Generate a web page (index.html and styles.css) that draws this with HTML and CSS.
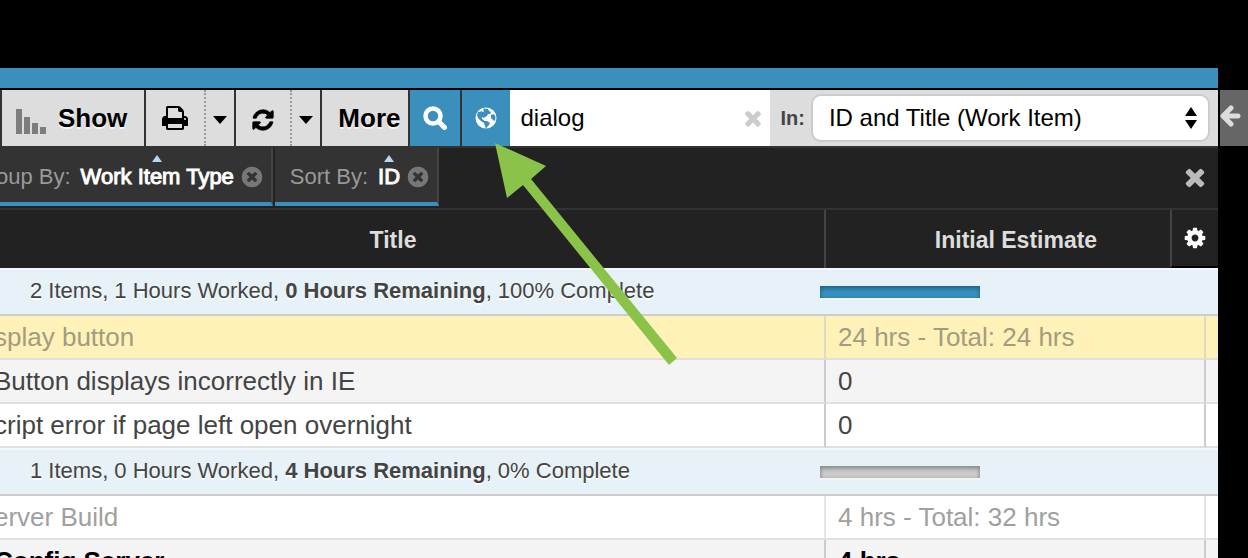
FILE: index.html
```html
<!DOCTYPE html>
<html lang="en">
<head>
  <meta charset="utf-8">
  <title>Work Items</title>
  <link rel="stylesheet" href="styles.css">
</head>
<body>
  <svg class="sprite" aria-hidden="true">
    <symbol id="i-times" viewBox="0 0 1792 1792"><path d="M1490 1322q0 40-28 68l-136 136q-28 28-68 28t-68-28l-294-294-294 294q-28 28-68 28t-68-28l-136-136q-28-28-28-68t28-68l294-294-294-294q-28-28-28-68t28-68l136-136q28-28 68-28t68 28l294 294 294-294q28-28 68-28t68 28l136 136q28 28 28 68t-28 68l-294 294 294 294q28 28 28 68z"/></symbol>
    <symbol id="i-remove" viewBox="0 0 1792 1792"><path d="M1277 1122q0-26-19-45l-181-181 181-181q19-19 19-45 0-27-19-46l-90-90q-19-19-46-19-26 0-45 19l-181 181-181-181q-19-19-45-19-27 0-46 19l-90 90q-19 19-19 46 0 26 19 45l181 181-181 181q-19 19-19 45 0 27 19 46l90 90q19 19 46 19 26 0 45-19l181-181 181 181q19 19 45 19 27 0 46-19l90-90q19-19 19-46zm387-226q0 209-103 385.5t-279.5 279.5-385.5 103-385.5-103-279.5-279.5-103-385.5 103-385.5 279.5-279.5 385.5-103 385.5 103 279.5 279.5 103 385.5z"/></symbol>
  </svg>

  <div class="page">
    <main class="panel">
      <div class="topBar"></div>

      <div class="toolbar">
        <button class="tool showBtn" type="button">
          <svg width="32" height="26" viewBox="0 0 32 26"><path fill="#7d7d7d" d="M0 1h6v25H0zM8 9h6v17H8zM16 15h6v11h-6zM24 19h6v7h-6z"/></svg>
          Show
        </button>
        <div class="split">
          <button class="tool printBtn" type="button" aria-label="Print">
            <svg width="28" height="28" viewBox="0 0 1792 1792"><path d="M448 1536h896v-256h-896v256zm0-640h896v-384h-160q-40 0-68-28t-28-68v-160h-640v640zm1152 64q0-26-19-45t-45-19-45 19-19 45 19 45 45 19 45-19 19-45zm128 0v416q0 13-9.500 22.500t-22.500 9.500h-224v160q0 40-28 68t-68 28h-960q-40 0-68-28t-28-68v-160h-224q-13 0-22.500-9.500t-9.500-22.500v-416q0-79 56.500-135.500t135.500-56.500h64v-544q0-40 28-68t68-28h672q40 0 88 20t76 48l152 152q28 28 48 76t20 88v256h64q79 0 135.500 56.500t56.500 135.500z"/></svg>
          </button>
          <button class="tool caret" type="button" aria-label="Print options">
            <svg width="14" height="8" viewBox="0 0 14 8"><path d="M0 0h14L7 8z"/></svg>
          </button>
        </div>
        <div class="split">
          <button class="tool refreshBtn" type="button" aria-label="Refresh">
            <svg width="24" height="24" viewBox="0 0 1792 1792"><path d="M1639 1056q0 5-1 7-64 268-268 434.500t-478 166.500q-146 0-282.500-55t-243.500-157l-129 129q-19 19-45 19t-45-19-19-45v-448q0-26 19-45t45-19h448q26 0 45 19t19 45-19 45l-137 137q71 66 161 102t187 36q134 0 250-65t186-179q11-17 53-117 8-23 30-23h192q13 0 22.500 9.500t9.500 22.500zm25-800v448q0 26-19 45t-45 19h-448q-26 0-45-19t-19-45 19-45l138-138q-148-137-349-137-134 0-250 65t-186 179q-11 17-53 117-8 23-30 23h-199q-13 0-22.500-9.500t-9.500-22.500v-7q65-268 270-434.500t480-166.500q146 0 284 55.500t245 156.500l130-129q19-19 45-19t45 19 19 45z"/></svg>
          </button>
          <button class="tool caret" type="button" aria-label="Refresh options">
            <svg width="14" height="8" viewBox="0 0 14 8"><path d="M0 0h14L7 8z"/></svg>
          </button>
        </div>
        <button class="tool moreBtn" type="button">More</button>
        <button class="tool blue searchBtn" type="button" aria-label="Search">
          <svg width="24" height="24" viewBox="0 0 24 24"><circle cx="10" cy="10" r="7.500" fill="none" stroke="#fff" stroke-width="4.500"/><path d="M15.500 15.500l6 6" stroke="#fff" stroke-width="5" stroke-linecap="round"/></svg>
        </button>
        <button class="tool blue globeBtn" type="button" aria-label="Search everywhere">
          <svg width="22" height="22" viewBox="0 0 22 22"><circle cx="11" cy="11" r="10.500"/><path fill="#3a8fbd" d="M9 1.500l4 .5 1 2 2 1-1 2-2 0-1 2-2 1-1 1-2-1 0 2 2 1 0 1 3 0 3 2-1 2-2 2-1 2-1-3-1-3-3-2-3-3-1-3 1-3 2 0 1-1 2 1 1-1-1-2zM16 8l3-1 1.500 3-.5 4-2-1-2-2z"/></svg>
        </button>
        <div class="searchBox">
          <input type="text" value="dialog" aria-label="Search text">
          <button class="clearBtn" type="button" aria-label="Clear"><svg width="24" height="24"><use href="#i-times"/></svg></button>
        </div>
        <div class="scope">
          <label for="scope">In:</label>
          <div class="selectWrap">
            <select id="scope"><option>ID and Title (Work Item)</option></select>
            <svg class="arrows" width="12" height="22" viewBox="0 0 12 22"><path d="M6 0l6 9H0zM6 22l6-9H0z"/></svg>
          </div>
        </div>
      </div>

      <div class="filters">
        <div class="chip"><span class="chipLabel">oup By:</span><span class="chipValue">Work Item Type</span><button type="button" aria-label="Remove grouping"><svg width="24" height="24"><use href="#i-remove"/></svg></button></div>
        <div class="chip sortChip"><span class="chipLabel">Sort By:</span><span class="chipValue">ID</span><button type="button" aria-label="Remove sort"><svg width="24" height="24"><use href="#i-remove"/></svg></button></div>
        <button class="closeBtn" type="button" aria-label="Close"><svg width="28" height="28"><use href="#i-times"/></svg></button>
      </div>

      <div class="gridWrap">
        <table class="grid">
          <colgroup><col><col class="colEstimate"><col class="colEnd"></colgroup>
          <thead>
            <tr><th class="titleHead">Title</th><th>Initial Estimate</th><th></th></tr>
          </thead>
          <tbody>
            <tr class="group">
              <td colspan="3"><div class="summary"><span>2 Items, 1 Hours Worked, <b>0 Hours Remaining</b>, 100% Complete</span><div class="bar done"></div></div></td>
            </tr>
            <tr class="picked"><td>splay button</td><td>24 hrs - Total: 24 hrs</td><td></td></tr>
            <tr class="odd"><td>Button displays incorrectly in IE</td><td>0</td><td></td></tr>
            <tr><td>cript error if page left open overnight</td><td>0</td><td></td></tr>
            <tr class="group">
              <td colspan="3"><div class="summary"><span>1 Items, 0 Hours Worked, <b>4 Hours Remaining</b>, 0% Complete</span><div class="bar"></div></div></td>
            </tr>
            <tr class="dim"><td>erver Build</td><td>4 hrs - Total: 32 hrs</td><td></td></tr>
            <tr class="odd strong"><td>Config Server</td><td>4 hrs</td><td></td></tr>
          </tbody>
        </table>
        <button class="gearBtn" type="button" aria-label="Columns">
          <svg width="24" height="24" viewBox="0 0 1792 1792"><path d="M1152 896q0-106-75-181t-181-75-181 75-75 181 75 181 181 75 181-75 75-181zm512-109v222q0 12-8 23t-20 13l-185 28q-19 54-39 91 35 50 107 138 10 12 10 25t-9 23q-27 37-99 108t-94 71q-12 0-26-9l-138-108q-44 23-91 38-16 136-29 186-7 28-36 28h-222q-14 0-24.500-8.500t-11.500-21.500l-28-184q-49-16-90-37l-141 107q-10 9-25 9-14 0-25-11-126-114-165-168-7-10-7-23 0-12 8-23 15-21 51-66.500t54-70.500q-27-50-41-99l-183-27q-13-2-21-12.500t-8-23.500v-222q0-12 8-23t19-13l186-28q14-46 39-92-40-57-107-138-10-12-10-24 0-10 9-23 26-36 98.500-107.500t94.500-71.500q13 0 26 10l138 107q44-23 91-38 16-136 29-186 7-28 36-28h222q14 0 24.500 8.500t11.500 21.500l28 184q49 16 90 37l142-107q9-9 24-9 13 0 25 10 129 119 165 170 7 8 7 22 0 12-8 23-15 21-51 66.500t-54 70.500q26 50 41 98l183 28q13 2 21 12.500t8 23.500z"/></svg>
        </button>
      </div>
    </main>

    <aside class="side">
      <button type="button" aria-label="Open side panel">
        <svg width="22" height="24" viewBox="0 0 22 24"><path d="M11 4l-8 8 8 8M4 12h14" fill="none" stroke="#ddd" stroke-width="5" stroke-linecap="round" stroke-linejoin="round"/></svg>
      </button>
    </aside>

    <svg class="pointer" width="184" height="224" viewBox="0 0 184 224"><path fill="#8bc34a" d="M0 0l51 23-15 13 146 179-8 7L28 42 12 55z"/></svg>
  </div>
</body>
</html>
```

FILE: styles.css
```css
* {
  box-sizing: border-box;
}

body {
  margin: 0;
  background: #000;
  font-family: "Liberation Sans", Arial, sans-serif;
  color: #444;
  overflow: hidden;
}

button {
  font: inherit;
  color: inherit;
  border: 0;
  padding: 0;
  background: none;
}

svg {
  display: block;
  fill: currentColor;
}

.sprite {
  position: absolute;
  width: 0;
  height: 0;
}

.page {
  position: relative;
  display: flex;
  gap: 2px;
  height: 100vh;
  padding-top: 68px;
  overflow: hidden;
}

.panel {
  flex: 1;
  min-width: 0;
}

.topBar {
  height: 20px;
  margin-bottom: 2px;
  background: #3a8fbd;
}

/* toolbar */
.toolbar {
  display: flex;
  gap: 2px;
  height: 58px;
  padding-left: 2px;
  border-bottom: 2px solid #333;
  background: #333;
}

.tool {
  display: flex;
  align-items: center;
  justify-content: center;
  background: #ddd;
  color: #000;
  font-size: 26px;
  font-weight: bold;
  text-shadow: 0 2px 0 #f4f4f4;
}

.showBtn {
  gap: 10px;
  padding: 0 17px 0 14px;
}

.showBtn svg {
  margin-top: 6px;
}

.split {
  display: flex;
}

.printBtn {
  width: 60px;
  border-right: 2px dotted #999;
}

.refreshBtn {
  width: 56px;
  padding-top: 3px;
  border-right: 2px dotted #999;
}

.refreshBtn path {
  stroke: currentColor;
  stroke-width: 50px;
}

.caret {
  width: 28px;
  padding-top: 3px;
}

.moreBtn {
  padding: 0 8px 0 16px;
}

.blue {
  background: #3a8fbd;
  color: #fff;
}

.searchBtn {
  width: 50px;
}

.globeBtn {
  width: 48px;
}

.searchBox {
  display: flex;
  align-items: center;
  width: 260px;
  margin-left: -2px;
  padding: 0 5px 0 10px;
  background: #fff;
}

.searchBox input {
  flex: 1;
  min-width: 0;
  border: 0;
  padding: 0;
  outline: none;
  background: none;
  color: #000;
  font: 24px "Liberation Sans", Arial, sans-serif;
}

.clearBtn {
  color: #ccc;
}

.scope {
  flex: 1;
  display: flex;
  align-items: center;
  gap: 6px;
  margin-left: -2px;
  padding: 0 8px 0 10px;
  background: #ddd;
}

.scope label {
  font-size: 20px;
  font-weight: bold;
}

.selectWrap {
  position: relative;
  flex: 1;
}

.scope select {
  width: 100%;
  height: 48px;
  padding: 0 30px 2px 16px;
  border: 2px solid #ccc;
  border-radius: 10px;
  appearance: none;
  background: #fff;
  color: #000;
  font: 24px "Liberation Sans", Arial, sans-serif;
}

.arrows {
  position: absolute;
  top: 13px;
  right: 13px;
  color: #000;
  pointer-events: none;
}

/* grouping and sorting */
.filters {
  display: flex;
  gap: 2px;
  height: 62px;
  padding-bottom: 2px;
  border-bottom: 2px solid #333;
  background: #222;
}

.chip {
  display: flex;
  align-items: center;
  height: 58px;
  padding: 3px 7px 0 0;
  border-right: 2px solid #444;
  border-bottom: 4px solid #3a8fbd;
  background: #333;
  color: #777;
  font-size: 22px;
}

.sortChip {
  padding-left: 15px;
}

.chipLabel {
  margin-right: 10px;
  color: #999;
}

.chip:first-child .chipLabel {
  margin-left: -4px;
}

.chipValue {
  position: relative;
  margin-right: 6px;
  color: #fff;
  -webkit-text-stroke: 1px #fff;
}

.chipValue::before {
  content: "";
  position: absolute;
  left: 50%;
  top: -9px;
  margin-left: -5px;
  border: 5px solid transparent;
  border-top: 0;
  border-bottom: 7px solid #b3d9ee;
}

.closeBtn {
  margin-left: auto;
  padding-right: 9px;
  color: #bbb;
}

/* work items */
.gridWrap {
  position: relative;
}

.grid {
  width: 100%;
  table-layout: fixed;
  border-collapse: separate;
  border-spacing: 0;
}

.colEstimate {
  width: 380px;
}

.colEnd {
  width: 12px;
}

.grid th {
  height: 58px;
  padding: 2px 0 0;
  border-right: 2px solid #444;
  background: #222;
  color: #ddd;
  font-size: 23px;
}

.grid th.titleHead {
  padding-right: 38px;
}

.grid th:nth-child(n+2) {
  border-right: 0;
}

.grid td {
  height: 44px;
  padding: 0 0 0 12px;
  border-right: 2px solid #ccc;
  border-bottom: 2px solid #e0e0e0;
  background: #fff;
  font-size: 26px;
  line-height: 30px;
  white-space: nowrap;
  overflow: hidden;
}

.grid td:first-child {
  padding-left: 0;
  text-indent: -6px;
}

.grid td:last-child {
  border-right: 0;
}

.grid .odd td {
  background: #f4f4f4;
}

.grid .picked td {
  border-right-color: #e0d9c4;
  background: #fef2b8;
  color: #a39c7f;
}

.grid .dim td {
  border-right-color: #e4e4e4;
  color: #a0a0a0;
}

.grid .strong td {
  color: #000;
  font-weight: bold;
}

.grid .group td {
  height: 48px;
  padding: 0 238px 2px 30px;
  border-top: 2px solid #f2f8fb;
  border-bottom-color: #ccc;
  background: #e6f1f8;
  font-size: 22px;
  text-indent: 0;
  text-shadow: 0 2px 0 #fff;
}

.summary {
  display: flex;
  align-items: center;
  justify-content: space-between;
}

.bar {
  width: 160px;
  height: 12px;
  margin-top: 2px;
  background: #ccc;
  box-shadow: inset 0 2px 5px rgba(0, 0, 0, 0.4), 0 2px 0 #f4f4f4;
}

.done {
  background: #3592c2;
}

.gearBtn {
  position: absolute;
  top: 0;
  right: 0;
  display: flex;
  align-items: center;
  justify-content: center;
  width: 48px;
  height: 58px;
  border-left: 2px solid #444;
  border-bottom: 2px solid #000;
  background: #222;
  color: #fff;
}

/* collapsed side panel */
.side {
  width: 28px;
  margin-top: 22px;
}

.side button {
  display: flex;
  align-items: center;
  width: 100%;
  height: 56px;
  padding-bottom: 4px;
  background: #666;
  color: #ddd;
}

.pointer {
  position: absolute;
  left: 495px;
  top: 143px;
}
```
